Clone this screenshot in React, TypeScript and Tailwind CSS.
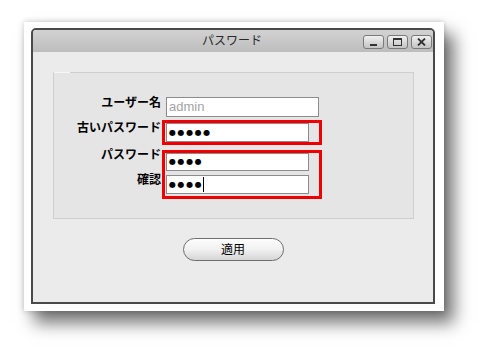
import React from "react";

const jp = "font-['Liberation_Sans','Noto_Sans_CJK_JP',sans-serif]";

function Dots({ count }: { count: number }) {
  return (
    <span className="font-['DejaVu_Sans',sans-serif] text-[8px] leading-[10px] tracking-[1.6px] text-black">
      {"●".repeat(count)}
    </span>
  );
}

function TitleButton({ kind }: { kind: "min" | "max" | "close" }) {
  return (
    <div className="w-[21px] h-[14px] rounded-[3px] border border-[#7a7a7a] bg-gradient-to-b from-[#f0f0f0] to-[#c4c4c4] flex items-center justify-center">
      {kind === "min" && <div className="w-[7px] h-[2px] bg-[#333] mt-[5px]" />}
      {kind === "max" && <div className="w-[9px] h-[8px] border-[1.5px] border-[#333] border-t-2" />}
      {kind === "close" && (
        <svg width="9" height="8" viewBox="0 0 9 8">
          <path d="M1 0.5 L8 7.5 M8 0.5 L1 7.5" stroke="#333" strokeWidth="1.8" />
        </svg>
      )}
    </div>
  );
}

export default function App() {
  return (
    <div className={`w-[485px] h-[352px] bg-white pt-[22px] pl-[24px] ${jp}`}>
      <div className="w-[420px] h-[289px] bg-white pl-[7px] pt-[6px] shadow-[0_0_6px_rgba(0,0,0,0.22),10px_12px_16px_rgba(0,0,0,0.55)]">
        <div className="w-[404px] h-[276px] border-2 border-[#4a4a4a] rounded-t-[5px] bg-[#ebebeb] flex flex-col overflow-hidden">
          {/* title bar */}
          <div className="relative h-[22px] shrink-0 bg-gradient-to-b from-[#d2d2d2] to-[#bdbdbd] flex items-center justify-end pr-[1px]">
            <div className="absolute inset-0 flex items-center justify-center text-[12px] text-[#2a2a2a] pr-[2px]">
              パスワード
            </div>
            <div className="relative flex gap-[3px] mt-[2px]">
              <TitleButton kind="min" />
              <TitleButton kind="max" />
              <TitleButton kind="close" />
            </div>
          </div>

          {/* body */}
          <div className="flex flex-col flex-1">
            <div className="ml-[20px] mt-[20px] w-[361px] h-[147px] border-x border-b border-[#cfcfcf] bg-[#e5e5e5] flex flex-col">
              <div className="flex h-px shrink-0">
                <div className="w-[16px] bg-[#f7f7f7]" />
                <div className="flex-1 bg-[#cfcfcf]" />
              </div>
              <div className="flex">
                <div className="w-[107px] pt-[23px] flex flex-col items-end text-[12px] leading-[14px] font-bold text-black">
                  <div>ユーザー名</div>
                  <div className="mt-[11px]">古いパスワード</div>
                  <div className="mt-[13px]">パスワード</div>
                  <div className="mt-[11px]">確認</div>
                </div>
                <div className="ml-[1px] pt-[24px] flex flex-col">
                  <div className="pl-[4px]">
                    <div className="w-[153px] h-[20px] bg-white border border-[#8c8c8c] flex items-center pl-[2px] font-['Liberation_Sans',sans-serif] text-[13px] text-[#a3a3a3]">
                      admin
                    </div>
                  </div>
                  <div className="mt-[3px] w-[160px] border-[3px] border-[#ee0000]">
                    <div className="ml-[1px] w-[143px] h-[19px] bg-white border border-[#8c8c8c] flex items-center pl-[2px]">
                      <Dots count={5} />
                    </div>
                  </div>
                  <div className="mt-[5px] w-[160px] border-[3px] border-[#ee0000] pb-[2px] flex flex-col gap-[4px]">
                    <div className="ml-[1px] w-[143px] h-[18px] bg-white border border-[#8c8c8c] flex items-center pl-[2px]">
                      <Dots count={4} />
                    </div>
                    <div className="ml-[1px] w-[143px] h-[19px] bg-white border border-[#8c8c8c] flex items-center pl-[2px]">
                      <Dots count={4} />
                      <div className="w-px h-[15px] bg-black" />
                    </div>
                  </div>
                </div>
              </div>
            </div>

            <div className="mt-[19px] flex justify-center">
              <button className="w-[101px] h-[23px] rounded-full border border-[#6e6e6e] bg-gradient-to-b from-[#fdfdfd] via-[#f1f1f1] to-[#d6d6d6] text-[12px] text-black leading-none">
                適用
              </button>
            </div>
          </div>
        </div>
      </div>
    </div>
  );
}
